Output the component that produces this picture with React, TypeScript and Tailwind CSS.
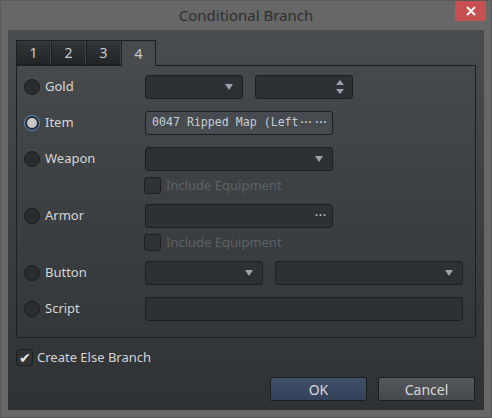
import React from 'react'

const ui = "font-['Noto_Sans','Open_Sans',sans-serif]"

function Arrow() {
  return (
    <svg width="8" height="6" viewBox="0 0 8 6" className="shrink-0">
      <path d="M0 0 H8 L4 6 Z" fill="#9aa3ad" />
    </svg>
  )
}

function Radio({ checked = false }: { checked?: boolean }) {
  return (
    <div
      className={`w-4 h-4 rounded-full flex items-center justify-center shrink-0 border ${
        checked ? 'border-[#5b8fd0] bg-[#2a2d30]' : 'border-[#1b1d1f] bg-[#2a2d30]'
      }`}
    >
      {checked && <div className="w-[10px] h-[10px] rounded-full bg-[#c9c9c9]" />}
    </div>
  )
}

function Combo({ width }: { width: string }) {
  return (
    <div className={`${width} h-6 rounded-[3px] border border-[#1c1e20] bg-[#2e3134] flex items-center justify-end pr-[9px]`}>
      <Arrow />
    </div>
  )
}

function Check({ label, disabled = false }: { label: string; disabled?: boolean }) {
  return (
    <div className="flex items-center gap-[5px] h-[17px]">
      <div className="w-[17px] h-[17px] rounded-[3px] border border-[#1c1e20] bg-[#303336]" />
      <span className={`text-[13px] ${disabled ? 'text-[#5c6165]' : 'text-[#d4d4d4]'}`}>{label}</span>
    </div>
  )
}

function Row({ label, checked, children }: { label: string; checked?: boolean; children?: React.ReactNode }) {
  return (
    <div className="flex items-center h-6">
      <div className="w-[128px] flex items-center gap-[5px] pl-[7px]">
        <Radio checked={checked} />
        <span className="text-[13px] text-[#d6d6d6]">{label}</span>
      </div>
      {children}
    </div>
  )
}

// three tight dots used for truncation and the "..." picker
function Dots() {
  return <span className="tracking-[-3px] pr-[3px]">···</span>
}

const tabs = ['1', '2', '3', '4']

export default function App() {
  return (
    <div className={`w-[492px] h-[418px] bg-[#676767] border border-[#5a5a5a] flex flex-col ${ui}`}>
      {/* title bar */}
      <div className="relative h-[29px] flex items-center justify-center">
        <span className="text-[15px] text-[#2e2e2e]">Conditional Branch</span>
        <div className="absolute right-[5px] top-0 w-[31px] h-5 bg-[#c75050] flex items-center justify-center">
          <svg width="10" height="10" viewBox="0 0 10 10">
            <path d="M1 1 L9 9 M9 1 L1 9" stroke="#fff" strokeWidth="1.8" />
          </svg>
        </div>
      </div>

      {/* client area */}
      <div className="ml-[7px] mr-[7px] h-[380px] bg-gradient-to-b from-[#484c4f] to-[#2f3235] pt-[10px] px-2">
        {/* tab strip */}
        <div className="flex h-[25px] items-stretch">
          {tabs.map((t) => {
            const active = t === '4'
            return (
              <div
                key={t}
                className={`w-[35px] flex items-center justify-center text-[14px] text-[#c4cdd5] border border-[#1c1e20] ${
                  active
                    ? 'border-b-0 bg-[#474b4e] -mb-px relative z-10'
                    : 'bg-gradient-to-b from-[#34373a] to-[#222528] border-r-[#3e4245]'
                }`}
              >
                {t}
              </div>
            )
          })}
        </div>

        {/* tab page */}
        <div className="w-[460px] h-[273px] border border-[#1c1e20] flex flex-col pt-[9px]">
          <Row label="Gold">
            <Combo width="w-[98px]" />
            <div className="ml-3 w-[98px] h-6 rounded-[3px] border border-[#1c1e20] bg-[#2e3134] flex flex-col items-end justify-center gap-[4px] pr-[8px]">
              <svg width="8" height="5" viewBox="0 0 8 5">
                <path d="M0 5 H8 L4 0 Z" fill="#9aa3ad" />
              </svg>
              <svg width="8" height="5" viewBox="0 0 8 5">
                <path d="M0 0 H8 L4 5 Z" fill="#9aa3ad" />
              </svg>
            </div>
          </Row>

          <div className="mt-3">
            <Row label="Item" checked>
              <div className="w-[188px] h-6 rounded-[3px] border border-[#1c1e20] bg-[#474b4f] flex items-center pl-[6px] pr-[4px] font-['DejaVu_Sans_Mono',monospace] text-[11.6px] text-[#c3ced8] whitespace-nowrap overflow-hidden">
                <span className="flex-1">
                  0047 Ripped Map (Left
                  <Dots />
                </span>
                <Dots />
              </div>
            </Row>
          </div>

          <div className="mt-3">
            <Row label="Weapon">
              <Combo width="w-[188px]" />
            </Row>
          </div>
          <div className="mt-[6px] pl-[127px]">
            <Check label="Include Equipment" disabled />
          </div>

          <div className="mt-[10px]">
            <Row label="Armor">
              <div className="w-[188px] h-6 rounded-[3px] border border-[#1c1e20] bg-[#2e3134] flex items-center justify-end pr-[4px] text-[11.6px] text-[#b8c0c8] font-['DejaVu_Sans_Mono',monospace]">
                <Dots />
              </div>
            </Row>
          </div>
          <div className="mt-[6px] pl-[127px]">
            <Check label="Include Equipment" disabled />
          </div>

          <div className="mt-[10px]">
            <Row label="Button">
              <Combo width="w-[118px]" />
              <div className="ml-3">
                <Combo width="w-[188px]" />
              </div>
            </Row>
          </div>

          <div className="mt-3">
            <Row label="Script">
              <div className="w-[318px] h-6 rounded-[3px] border border-[#1c1e20] bg-[#2e3134]" />
            </Row>
          </div>
        </div>

        {/* else branch */}
        <div className="mt-[11px]">
          <div className="flex items-center gap-[4px] h-[17px]">
            <div className="w-[17px] h-[17px] rounded-[3px] border border-[#1c1e20] bg-[#303336] flex items-center justify-center text-[14px] leading-none text-[#e8e8e8]">
              ✔
            </div>
            <span className="text-[13px] text-[#d4d4d4]">Create Else Branch</span>
          </div>
        </div>

        {/* buttons */}
        <div className="mt-[11px] flex justify-end gap-[11px] pr-[1px]">
          <button className="w-[97px] h-6 rounded-[2px] border border-[#1c1e20] bg-gradient-to-b from-[#40506a] to-[#33425a] text-[14px] text-[#d8d8d8]">
            OK
          </button>
          <button className="w-[97px] h-6 rounded-[2px] border border-[#1c1e20] bg-gradient-to-b from-[#54585c] to-[#46494d] text-[14px] text-[#d8d8d8]">
            Cancel
          </button>
        </div>
      </div>
    </div>
  )
}
